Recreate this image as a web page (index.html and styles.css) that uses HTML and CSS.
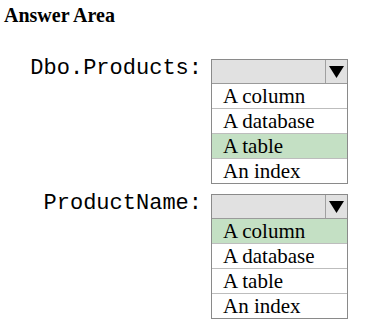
FILE: index.html
```html
<!DOCTYPE html>
<html>
<head>
<meta charset="utf-8">
<link rel="stylesheet" href="styles.css">
</head>
<body>
<div class="page">
  <h1 class="title">Answer Area</h1>
  <div class="qa">
    <div class="row">
      <div class="label">Dbo.Products:</div>
      <div class="dropdown">
        <div class="head"><span class="field"></span><span class="arrow"><svg width="15" height="12" viewBox="0 0 15 12"><path d="M0 0H15L7.5 12Z" fill="#000"/></svg></span></div>
        <ul class="list">
          <li>A column</li>
          <li>A database</li>
          <li class="sel">A table</li>
          <li>An index</li>
        </ul>
      </div>
    </div>
    <div class="row">
      <div class="label">ProductName:</div>
      <div class="dropdown">
        <div class="head"><span class="field"></span><span class="arrow"><svg width="15" height="12" viewBox="0 0 15 12"><path d="M0 0H15L7.5 12Z" fill="#000"/></svg></span></div>
        <ul class="list">
          <li class="sel">A column</li>
          <li>A database</li>
          <li>A table</li>
          <li>An index</li>
        </ul>
      </div>
    </div>
  </div>
</div>
</body>
</html>
```
FILE: styles.css
```css
html, body {
  margin: 0;
  padding: 0;
  background: #fff;
}
.page {
  padding: 5px 0 0 4px;
  font-family: "Liberation Serif", "Times New Roman", serif;
  color: #000;
}
.title {
  margin: 0;
  font-size: 20px;
  font-weight: bold;
  line-height: 20px;
}
.qa {
  display: flex;
  flex-direction: column;
  gap: 10px;
  margin-top: 34px;
}
.row {
  display: flex;
  align-items: flex-start;
}
.label {
  width: 198px;
  text-align: right;
  font-family: "Liberation Mono", "Courier New", monospace;
  font-size: 22px;
  line-height: 16px;
  padding-top: 2px;
}
.dropdown {
  margin-left: 9px;
  width: 135px;
  border: 1px solid #8a8a8a;
}
.head {
  display: flex;
  height: 23px;
  background: #e1e1e1;
  border-bottom: 1px solid #9a9a9a;
}
.field {
  flex: 1;
}
.arrow {
  width: 21px;
  border-left: 1px solid #a0a0a0;
  display: flex;
  align-items: center;
  justify-content: center;
}
.list {
  list-style: none;
  margin: 0;
  padding: 0;
}
.list li {
  height: 24px;
  line-height: 24px;
  padding-left: 11px;
  font-size: 21px;
  border-top: 1px solid #bdbdbd;
}
.list li:first-child {
  border-top: none;
}
.list li.sel {
  background: #c4e0c4;
}
```
